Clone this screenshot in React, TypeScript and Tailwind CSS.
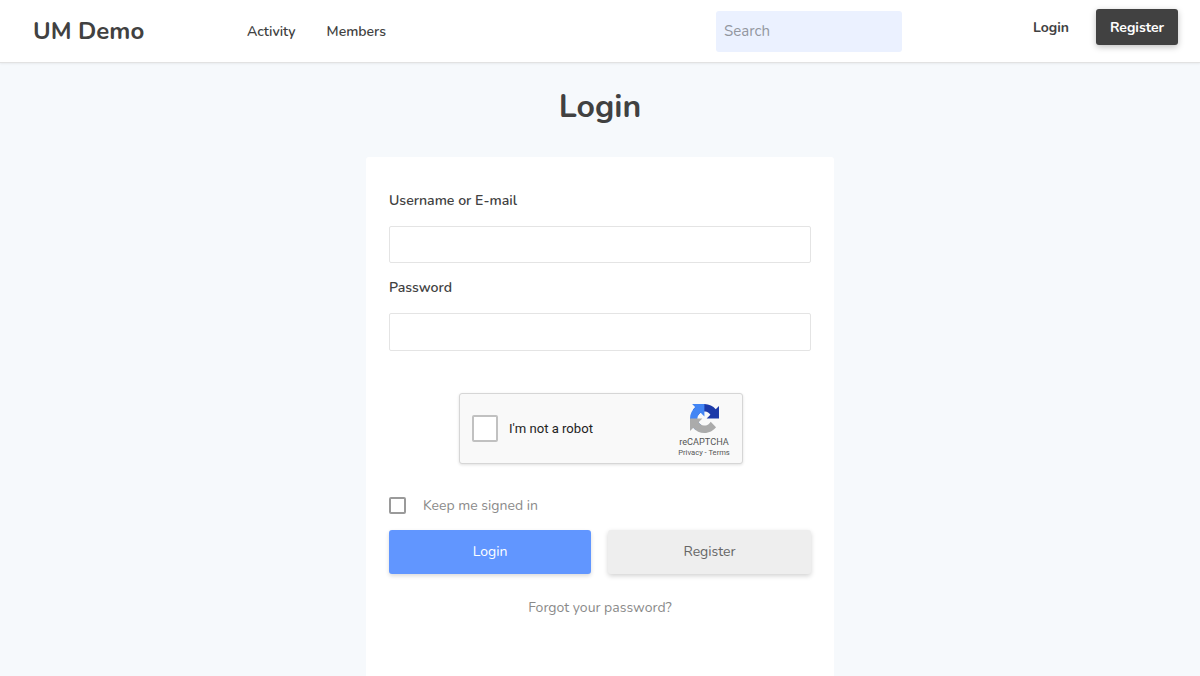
import React from 'react';

const RecaptchaLogo = () => (
  <svg width="29" height="29" viewBox="0 0 64 64">
    <path d="M64 31.955l-.033-1.37V4.687l-7.16 7.16C50.948 4.674 42.033.093 32.05.093c-10.4 0-19.622 4.96-25.458 12.64l11.736 11.86a15.55 15.55 0 0 1 4.754-5.334c2.05-1.6 4.952-2.906 8.968-2.906.485 0 .86.057 1.135.163 4.976.393 9.288 3.14 11.828 7.124l-8.307 8.307c10.522-.04 22.4-.066 27.295 0" fill="#1c3aa9" />
    <path d="M31.862.094l-1.37.033H4.594l7.16 7.16C4.58 13.147 0 22.06 0 32.043c0 10.4 4.96 19.622 12.64 25.458L24.5 45.765a15.55 15.55 0 0 1-5.334-4.754c-1.6-2.05-2.906-4.952-2.906-8.968 0-.485.057-.86.163-1.135.393-4.976 3.14-9.288 7.124-11.828l8.307 8.307c-.04-10.522-.066-22.4 0-27.295" fill="#4285f4" />
    <path d="M.001 32.045l.033 1.37v25.898l7.16-7.16c5.86 7.173 14.774 11.754 24.76 11.754 10.4 0 19.622-4.96 25.458-12.64L45.676 39.4a15.55 15.55 0 0 1-4.754 5.334c-2.05 1.6-4.952 2.906-8.968 2.906-.485 0-.86-.057-1.135-.163-4.976-.393-9.288-3.14-11.828-7.124l8.307-8.307c-10.522.04-22.4.066-27.295 0" fill="#ababab" />
  </svg>
);

const App: React.FC = () => {
  return (
    <div className="h-[676px] overflow-hidden bg-[#f6f9fc] font-['Nunito','Noto_Sans','Open_Sans',sans-serif] text-[#414141]">
      {/* Header */}
      <header className="flex h-[63px] items-center border-b border-[#e2e2e2] bg-white pl-[33px] pr-[22px] shadow-[0_1px_2px_rgba(0,0,0,0.06)]">
        <div className="w-[214px] text-[24px] font-bold">UM Demo</div>
        <nav className="flex gap-[31px] text-[14px] font-semibold">
          <span>Activity</span>
          <span>Members</span>
        </nav>
        <div className="ml-[330px] flex h-[41px] w-[186px] items-center rounded-[3px] bg-[#ebf1ff] px-[8px] text-[15px] text-[#93979f]">Search</div>
        <div className="mb-[8px] ml-auto flex items-center gap-[27px] text-[14px] font-bold">
          <span>Login</span>
          <span className="flex h-[36px] w-[82px] items-center justify-center rounded-[3px] bg-[#414141] text-white shadow-[0_2px_6px_rgba(0,0,0,0.25)]">Register</span>
        </div>
      </header>

      {/* Page */}
      <main className="flex flex-col items-center">
        <h1 className="mt-[24px] text-[32px] font-bold leading-[40px]">Login</h1>
        <div className="mt-[30px] h-[600px] w-[468px] rounded-[3px] bg-white px-[23px] pt-[34px]">
          <label className="block text-[14.1px] font-semibold leading-[20px]">Username or E-mail</label>
          <div className="mt-[15px] h-[37px] rounded-[2px] border border-[#e4e4e4] bg-white" />
          <label className="mt-[15px] block text-[14.1px] font-semibold leading-[20px]">Password</label>
          <div className="mt-[15px] h-[38px] rounded-[2px] border border-[#e4e4e4] bg-white" />

          <div className="mt-[42px] flex justify-center">
            <div className="ml-[2px] flex h-[71px] w-[284px] items-center rounded-[3px] border border-[#d6d6d6] bg-[#f9f9f9] px-[12px] font-['Roboto',sans-serif] shadow-[0_1px_3px_rgba(0,0,0,0.12)]">
              <div className="h-[27px] w-[26px] rounded-[2px] border-2 border-[#c1c1c1] bg-white" />
              <span className="ml-[11px] text-[13.1px] text-[#222]">I'm not a robot</span>
              <div className="ml-auto flex w-[52px] flex-col items-center whitespace-nowrap pt-[5px]">
                <RecaptchaLogo />
                <span className="mt-[3px] text-[9.2px] leading-[12px] text-[#555]">reCAPTCHA</span>
                <span className="text-[7.6px] leading-[10px] text-[#555]">Privacy - Terms</span>
              </div>
            </div>
          </div>

          <div className="mt-[31px] flex items-center">
            <div className="h-[17px] w-[17px] rounded-[2px] border-2 border-[#9a9a9a]" />
            <span className="ml-[17px] text-[14px] text-[#8a8a8a]">Keep me signed in</span>
          </div>

          <div className="mt-[14px] flex gap-[17px]">
            <div className="flex h-[44px] w-[202px] items-center justify-center rounded-[3px] bg-[#6196ff] pb-[2px] text-[14px] text-white shadow-[0_2px_4px_rgba(0,0,0,0.15)]">Login</div>
            <div className="flex h-[44px] w-[203px] items-center justify-center rounded-[3px] bg-[#eeeeee] pb-[2px] text-[14px] text-[#666] shadow-[0_2px_5px_rgba(0,0,0,0.18)]">Register</div>
          </div>

          <div className="mt-[23px] text-center text-[14px] text-[#8a8a8a]">Forgot your password?</div>
        </div>
      </main>
    </div>
  );
};

export default App;
